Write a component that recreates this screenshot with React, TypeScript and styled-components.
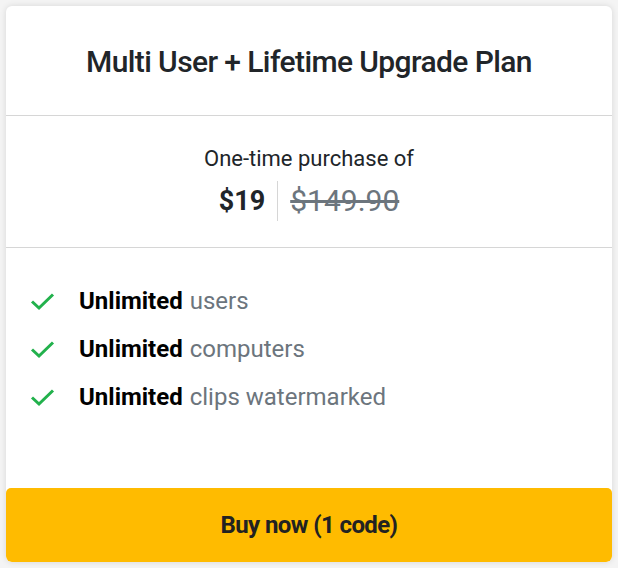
import styled, { createGlobalStyle } from 'styled-components';

const GlobalStyle = createGlobalStyle`
  html, body {
    margin: 0;
    padding: 0;
    background: #f4f4f4;
  }
  body {
    font-family: Roboto, 'Liberation Sans', sans-serif;
    color: #212529;
  }
`;

const Page = styled.div`
  padding: 6px;
  box-sizing: border-box;
  width: 618px;
  height: 568px;
`;

const Card = styled.div`
  background: #fff;
  border-radius: 6px;
  box-shadow: 0 0 6px rgba(0, 0, 0, 0.12);
  height: 556px;
  display: flex;
  flex-direction: column;
  overflow: hidden;
`;

const Header = styled.div`
  height: 110px;
  display: flex;
  align-items: center;
  justify-content: center;
  padding-top: 2px;
  box-sizing: border-box;
  border-bottom: 1px solid #d6d6d6;
`;

const Title = styled.h2`
  margin: 0;
  font-family: Roboto, 'Liberation Sans', sans-serif;
  font-size: 30px;
  font-weight: 500;
  letter-spacing: -0.6px;
  color: #212529;
`;

const PriceBox = styled.div`
  height: 132px;
  border-bottom: 1px solid #d6d6d6;
  display: flex;
  flex-direction: column;
  align-items: center;
  padding-top: 29px;
  box-sizing: border-box;
`;

const Lead = styled.div`
  font-size: 22px;
  line-height: 28px;
  color: #212529;
`;

const PriceRow = styled.div`
  display: flex;
  align-items: center;
  margin-top: 8px;
`;

const Price = styled.span<{ $old?: boolean }>`
  font-size: ${({ $old }) => ($old ? '30px' : '27px')};
  font-weight: ${({ $old }) => ($old ? 400 : 700)};
  color: ${({ $old }) => ($old ? '#6c757d' : '#212529')};
  text-decoration: ${({ $old }) => ($old ? 'line-through' : 'none')};
  line-height: 40px;
`;

const Divider = styled.span`
  width: 1px;
  height: 40px;
  background: #d6d6d6;
  margin: 0 12px;
`;

const Features = styled.ul`
  list-style: none;
  margin: 0;
  padding: 39px 0 0 24px;
  flex: 1;
  display: flex;
  flex-direction: column;
  gap: 20px;
`;

const Feature = styled.li`
  display: flex;
  align-items: center;
  font-size: 24px;
  line-height: 28px;
  color: #6c757d;
`;

const Check = styled.svg`
  width: 25px;
  height: 24px;
  margin-right: 24px;
  flex-shrink: 0;
`;

const Strong = styled.b`
  color: #000;
  font-weight: 700;
  margin-right: 7px;
`;

const BuyButton = styled.button`
  height: 74px;
  border: none;
  border-radius: 5px;
  background: #ffbb00;
  color: #222;
  font-family: Roboto, 'Liberation Sans', sans-serif;
  font-size: 24px;
  font-weight: 700;
  letter-spacing: -0.6px;
  cursor: pointer;
`;

const items = ['users', 'computers', 'clips watermarked'];

const CheckIcon = () => (
  <Check viewBox="0 0 25 24" fill="none">
    <path d="M2 12.5l7 6.5L23 5.5" stroke="#22b14c" strokeWidth="3" />
  </Check>
);

export default function App() {
  return (
    <>
      <GlobalStyle />
      <Page>
        <Card>
          <Header>
            <Title>Multi User + Lifetime Upgrade Plan</Title>
          </Header>
          <PriceBox>
            <Lead>One-time purchase of</Lead>
            <PriceRow>
              <Price>$19</Price>
              <Divider />
              <Price $old>$149.90</Price>
            </PriceRow>
          </PriceBox>
          <Features>
            {items.map((t) => (
              <Feature key={t}>
                <CheckIcon />
                <Strong>Unlimited</Strong>
                {t}
              </Feature>
            ))}
          </Features>
          <BuyButton>Buy now (1 code)</BuyButton>
        </Card>
      </Page>
    </>
  );
}
